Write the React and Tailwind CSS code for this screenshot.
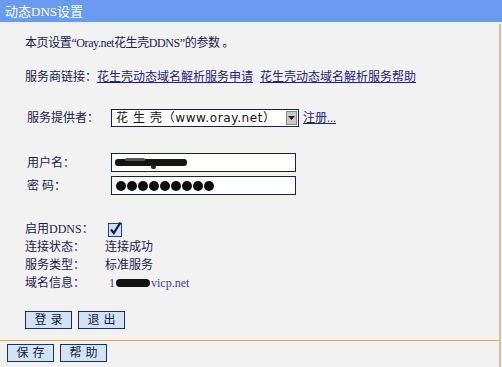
import React from 'react';

const FONT = '"Liberation Serif", "Noto Sans CJK SC", serif';

const Btn = ({ children }) => (
  <div className="flex h-[18px] w-[47px] items-center justify-center border border-[#1f2f5c] bg-[#d3e3f6] text-[12px] tracking-[4px] text-[#111a3c]">
    <span className="pl-[4px]">{children}</span>
  </div>
);

const Field = ({ children }) => (
  <div className="flex h-[19px] w-[185px] items-center border border-[#1b2140] bg-white px-[3px]">{children}</div>
);

const StatusRow = ({ label, children }) => (
  <div className="flex h-[18px] items-center">
    <span className="w-[80px] text-[#1a2150]">{label}</span>
    {children}
  </div>
);

export default function App() {
  return (
    <div className="h-[367px] w-[502px] overflow-hidden bg-[#f2f2f2] text-[12px] leading-[18px]" style={{ fontFamily: FONT }}>
      <div className="h-[22px] bg-[#6a9bf0] pl-[5px] text-[13px] leading-[23px] text-white">动态DNS设置</div>
      <div className="h-[2px] bg-[#e9eef8]" />

      <div className="w-[501px] border-r-2 border-[#d9c28e]">
        <div className="h-[316px] pl-[25px] text-[#1a2150]">
          <p className="pt-[10px] tracking-[-0.4px]">本页设置“Oray.net花生壳DDNS”的参数 。</p>

          <p className="mt-[16px] flex">
            <span>服务商链接：</span>
            <a className="text-[#1b237a] underline">花生壳动态域名解析服务申请</a>
            <a className="ml-[7px] text-[#1b237a] underline">花生壳动态域名解析服务帮助</a>
          </p>

          <div className="mt-[23px] flex h-[18px] items-center pl-[2px]">
            <span className="w-[84px]">服务提供者：</span>
            <div className="flex h-[18px] w-[188px] items-center border border-[#1b2140] bg-white">
              <span className="flex-1 pl-[4px] text-[12px] tracking-[0.6px] text-[#111]" style={{ fontFamily: '"DejaVu Sans", "Noto Sans CJK SC", sans-serif' }}>
                花 生 壳（www.oray.net）
              </span>
              <div className="mr-[1px] flex h-[14px] w-[11px] items-center justify-center border border-[#8a8a8a] bg-[#c9c9c9]">
                <svg width="7" height="4" viewBox="0 0 7 4"><path d="M0 0h7L3.5 4z" fill="#222" /></svg>
              </div>
            </div>
            <a className="ml-[4px] text-[#1b237a] underline">注册...</a>
          </div>

          <div className="mt-[26px] flex h-[19px] items-center pl-[2px]">
            <span className="w-[84px]">用户名：</span>
            <Field>
              <div className="relative h-[12px] w-[74px]">
                <div className="absolute left-0 top-[2px] h-[7px] w-[72px] rounded-[3px] bg-[#151515] blur-[0.7px]" />
                <div className="absolute left-[10px] top-[1px] h-[3px] w-[20px] rounded-full bg-[#555] blur-[0.6px]" />
                <div className="absolute left-[36px] top-[8px] h-[4px] w-[5px] rounded-full bg-[#222] blur-[0.5px]" />
              </div>
            </Field>
          </div>

          <div className="mt-[4px] flex h-[19px] items-center pl-[2px]">
            <span className="w-[84px]">密 码：</span>
            <Field>
              <div className="flex gap-[1px] pl-[1px]">
                {Array.from({ length: 9 }).map((_, i) => (
                  <span key={i} className="h-[10px] w-[10px] rounded-full bg-[#0c0c0c]" />
                ))}
              </div>
            </Field>
          </div>

          <div className="mt-[25px] flex h-[18px] items-center">
            <span className="w-[83px]">启用DDNS：</span>
            <svg width="15" height="15" viewBox="0 0 15 15">
              <rect x="0.5" y="1.5" width="13" height="13" fill="#cfe2f6" stroke="#23427e" />
              <path d="M3 7.5l2.8 3.5L12.5 0.5" fill="none" stroke="#0f1d45" strokeWidth="2.2" />
            </svg>
          </div>
          <StatusRow label="连接状态：">
            <span>连接成功</span>
          </StatusRow>
          <StatusRow label="服务类型：">
            <span>标准服务</span>
          </StatusRow>
          <StatusRow label="域名信息：">
            <span className="flex items-center pl-[4px] text-[#34458f]">
              1
              <span className="mx-[1px] h-[8px] w-[34px] rounded-full bg-[#111] blur-[0.6px]" />
              vicp.net
            </span>
          </StatusRow>

          <div className="mt-[19px] flex gap-[6px]">
            <Btn>登录</Btn>
            <Btn>退出</Btn>
          </div>
        </div>

        <div className="h-[1px] bg-[#cfb274]" />
        <div className="flex h-[26px] gap-[6px] pl-[7px] pt-[3px]">
          <Btn>保存</Btn>
          <Btn>帮助</Btn>
        </div>
      </div>
    </div>
  );
}
